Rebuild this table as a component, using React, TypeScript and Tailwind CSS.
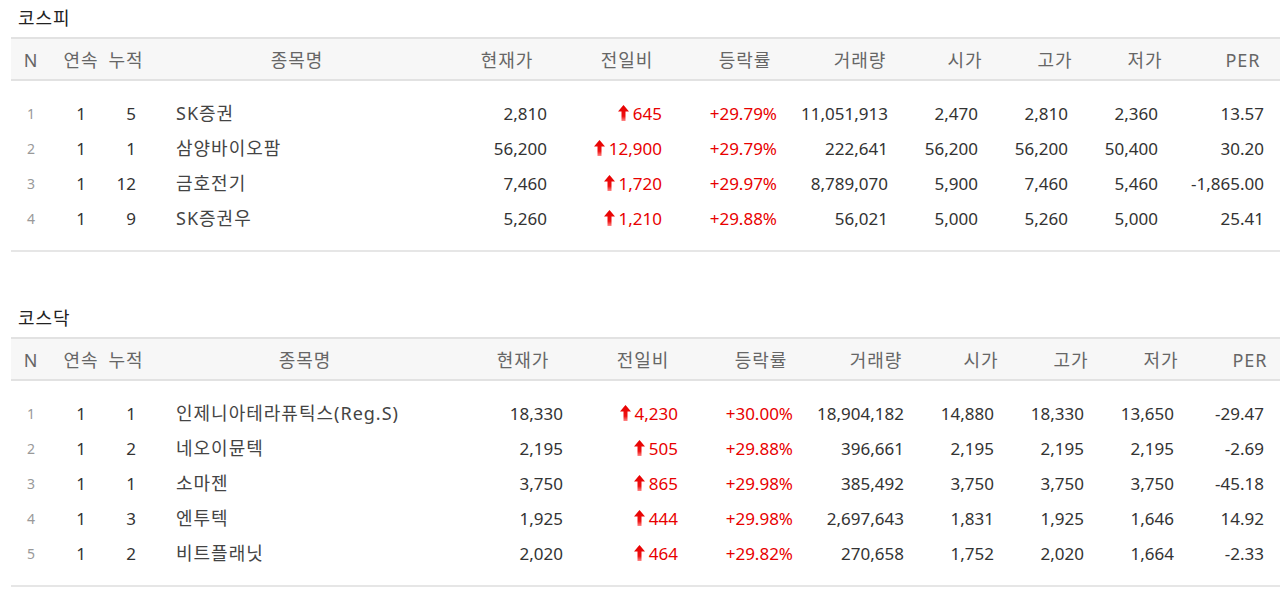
type Col = { label: string; w: number; pr?: number };

type Row = {
  n: number;
  seq: string;
  acc: string;
  name: string;
  price: string;
  diff: string;
  rate: string;
  vol: string;
  open: string;
  high: string;
  low: string;
  per: string;
};

const kospiCols: Col[] = [
  { label: "N", w: 40 },
  { label: "연속", w: 60 },
  { label: "누적", w: 30, pr: 5 },
  { label: "종목명", w: 312 },
  { label: "현재가", w: 108, pr: 14 },
  { label: "전일비", w: 132, pr: 31 },
  { label: "등락률", w: 104, pr: 20 },
  { label: "거래량", w: 126, pr: 35 },
  { label: "시가", w: 84, pr: 29 },
  { label: "고가", w: 96, pr: 35 },
  { label: "저가", w: 84, pr: 29 },
  { label: "PER", w: 112, pr: 35 },
];

const kosdaqCols: Col[] = [
  { label: "N", w: 40 },
  { label: "연속", w: 60 },
  { label: "누적", w: 30, pr: 5 },
  { label: "종목명", w: 328 },
  { label: "현재가", w: 108, pr: 14 },
  { label: "전일비", w: 132, pr: 31 },
  { label: "등락률", w: 104, pr: 20 },
  { label: "거래량", w: 126, pr: 35 },
  { label: "시가", w: 84, pr: 29 },
  { label: "고가", w: 96, pr: 35 },
  { label: "저가", w: 84, pr: 29 },
  { label: "PER", w: 94, pr: 33 },
];

const kospi: Row[] = [
  { n: 1, seq: "1", acc: "5", name: "SK증권", price: "2,810", diff: "645", rate: "+29.79%", vol: "11,051,913", open: "2,470", high: "2,810", low: "2,360", per: "13.57" },
  { n: 2, seq: "1", acc: "1", name: "삼양바이오팜", price: "56,200", diff: "12,900", rate: "+29.79%", vol: "222,641", open: "56,200", high: "56,200", low: "50,400", per: "30.20" },
  { n: 3, seq: "1", acc: "12", name: "금호전기", price: "7,460", diff: "1,720", rate: "+29.97%", vol: "8,789,070", open: "5,900", high: "7,460", low: "5,460", per: "-1,865.00" },
  { n: 4, seq: "1", acc: "9", name: "SK증권우", price: "5,260", diff: "1,210", rate: "+29.88%", vol: "56,021", open: "5,000", high: "5,260", low: "5,000", per: "25.41" },
];

const kosdaq: Row[] = [
  { n: 1, seq: "1", acc: "1", name: "인제니아테라퓨틱스(Reg.S)", price: "18,330", diff: "4,230", rate: "+30.00%", vol: "18,904,182", open: "14,880", high: "18,330", low: "13,650", per: "-29.47" },
  { n: 2, seq: "1", acc: "2", name: "네오이뮨텍", price: "2,195", diff: "505", rate: "+29.88%", vol: "396,661", open: "2,195", high: "2,195", low: "2,195", per: "-2.69" },
  { n: 3, seq: "1", acc: "1", name: "소마젠", price: "3,750", diff: "865", rate: "+29.98%", vol: "385,492", open: "3,750", high: "3,750", low: "3,750", per: "-45.18" },
  { n: 4, seq: "1", acc: "3", name: "엔투텍", price: "1,925", diff: "444", rate: "+29.98%", vol: "2,697,643", open: "1,831", high: "1,925", low: "1,646", per: "14.92" },
  { n: 5, seq: "1", acc: "2", name: "비트플래닛", price: "2,020", diff: "464", rate: "+29.82%", vol: "270,658", open: "1,752", high: "2,020", low: "1,664", per: "-2.33" },
];

function UpArrow() {
  return (
    <svg width="11" height="16" viewBox="0 0 11 16" className="mr-[4px] mb-[2px] shrink-0">
      <defs>
        <linearGradient id="upg" x1="0" y1="0" x2="0" y2="1">
          <stop offset="0" stopColor="#e60000" />
          <stop offset="0.7" stopColor="#ee1111" />
          <stop offset="1" stopColor="#f88" />
        </linearGradient>
      </defs>
      <path d="M5.5 0 L11 6.5 L7.5 6.5 L7.5 16 L3.5 16 L3.5 6.5 L0 6.5 Z" fill="url(#upg)" />
    </svg>
  );
}

function StockTable({ title, cols, rows }: { title: string; cols: Col[]; rows: Row[] }) {
  const cells = (r: Row) => [r.price, r.diff, r.rate, r.vol, r.open, r.high, r.low, r.per];

  return (
    <section>
      <h3 className="h-[37px] pl-[18px] pt-[5px] text-[18px] leading-[26px] tracking-[1px] font-normal text-[#222]">{title}</h3>
      <div className="ml-[11px] w-[1320px]">
        <div className="flex h-[44px] items-center border-y-2 border-[#e2e2e2] bg-[#f7f7f7] pt-[3px] text-[18px] tracking-[1px] text-[#666]">
          {cols.map((c) => (
            <div key={c.label} className="flex shrink-0 justify-center whitespace-nowrap" style={{ width: c.w }}>
              {c.label}
            </div>
          ))}
        </div>
        <div className="border-b-2 border-[#e6e6e6] pt-[15px] pb-[14px]">
          {rows.map((r) => (
            <div key={r.n} className="flex h-[35px] items-center text-[17px] text-[#333]">
              <div className="shrink-0 text-center text-[14px] text-[#999]" style={{ width: cols[0].w }}>
                {r.n}
              </div>
              <div className="shrink-0 text-center" style={{ width: cols[1].w }}>
                {r.seq}
              </div>
              <div className="shrink-0 text-right" style={{ width: cols[2].w, paddingRight: cols[2].pr }}>
                {r.acc}
              </div>
              <div className="shrink-0 whitespace-nowrap pl-[35px] text-[18px] tracking-[1px] text-[#444]" style={{ width: cols[3].w }}>
                {r.name}
              </div>
              {cells(r).map((v, i) => {
                const c = cols[i + 4];
                const red = i === 1 || i === 2;
                return (
                  <div
                    key={i}
                    className={`flex shrink-0 items-center justify-end whitespace-nowrap ${red ? "text-[#e80000]" : ""}`}
                    style={{ width: c.w, paddingRight: c.pr }}
                  >
                    {i === 1 && <UpArrow />}
                    {v}
                  </div>
                );
              })}
            </div>
          ))}
        </div>
      </div>
    </section>
  );
}

export default function App() {
  return (
    <div className="w-[1280px] min-h-[591px] overflow-hidden bg-white font-['Noto_Sans','Noto_Sans_CJK_KR',sans-serif]">
      <StockTable title="코스피" cols={kospiCols} rows={kospi} />
      <div className="h-[48px]" />
      <StockTable title="코스닥" cols={kosdaqCols} rows={kosdaq} />
    </div>
  );
}
